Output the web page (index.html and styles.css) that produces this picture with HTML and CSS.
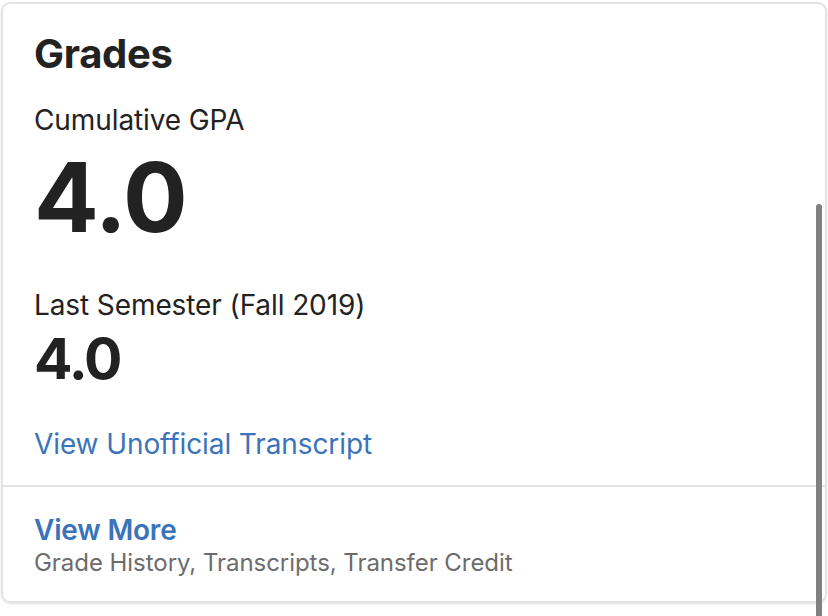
FILE: index.html
```html
<!DOCTYPE html>
<html lang="en">
<head>
<meta charset="utf-8">
<title>Grades</title>
<link rel="stylesheet" href="styles.css">
</head>
<body>
<div class="card">
  <div class="card-main">
    <h2 class="card-title">Grades</h2>
    <div class="label label-first">Cumulative GPA</div>
    <div class="gpa-big">4.0</div>
    <div class="label label-semester">Last Semester (Fall 2019)</div>
    <div class="gpa-small">4.0</div>
    <a class="link link-transcript" href="#">View Unofficial Transcript</a>
  </div>
  <div class="card-footer">
    <a class="link link-more" href="#">View More</a>
    <div class="footer-sub">Grade History, Transcripts, Transfer Credit</div>
  </div>
</div>
<div class="scroll-thumb"></div>
</body>
</html>
```

FILE: styles.css
```css
html, body {
  margin: 0;
  padding: 0;
  background: #ffffff;
}
body {
  font-family: Inter, "Noto Sans", sans-serif;
  color: #222222;
  position: relative;
  height: 616px;
  overflow: hidden;
}
.card {
  margin: 2px 1px 0 1px;
  border: 2px solid #e3e3e3;
  border-radius: 9px;
  box-shadow: 0 1px 2px rgba(0, 0, 0, 0.12);
  height: 601px;
  box-sizing: border-box;
  display: flex;
  flex-direction: column;
}
.card-main {
  padding: 26px 31px 23px 31px;
  display: flex;
  flex-direction: column;
  align-items: flex-start;
}
.card-title {
  margin: 0;
  font-size: 40px;
  line-height: 48px;
  font-weight: 700;
  letter-spacing: -0.3px;
}
.label {
  font-size: 28px;
  line-height: 36px;
  font-weight: 400;
  letter-spacing: -0.1px;
}
.label-first {
  margin-top: 24px;
}
.gpa-big {
  margin-top: 3px;
  font-size: 96px;
  line-height: 112px;
  font-weight: 700;
  letter-spacing: -1px;
}
.label-semester {
  margin-top: 34px;
}
.gpa-small {
  font-size: 57px;
  line-height: 72px;
  font-weight: 700;
  letter-spacing: -2px;
}
.link {
  color: #3b74ba;
  text-decoration: none;
  font-size: 28px;
  line-height: 36px;
  letter-spacing: -0.1px;
}
.link-transcript {
  margin-top: 31px;
}
.card-footer {
  border-top: 2px solid #e3e3e3;
  padding: 25px 31px 0 31px;
  display: flex;
  flex-direction: column;
  align-items: flex-start;
}
.link-more {
  font-weight: 600;
  letter-spacing: -0.2px;
}
.footer-sub {
  font-size: 24px;
  line-height: 30px;
  color: #6c6c6c;
  letter-spacing: -0.05px;
}
.scroll-thumb {
  position: absolute;
  left: 816px;
  top: 204px;
  width: 6px;
  height: 420px;
  background: #808080;
  border-radius: 3px 3px 0 0;
}
```
